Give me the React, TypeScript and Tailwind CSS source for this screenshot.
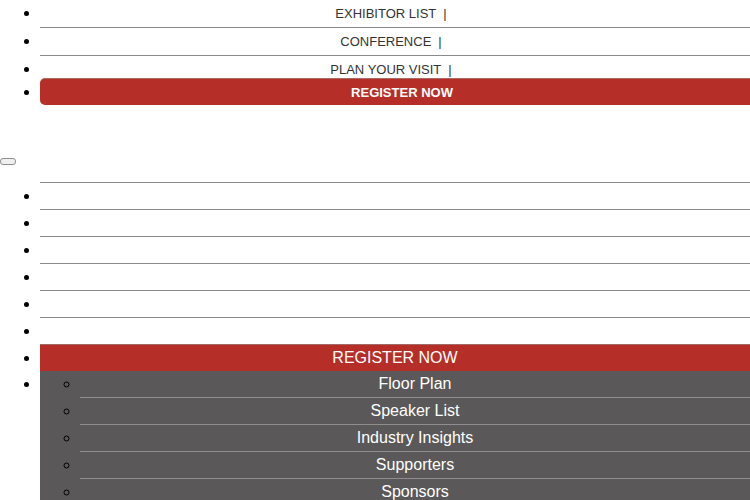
import React from "react";

const topItems = ["EXHIBITOR LIST", "CONFERENCE"];
const subItems = ["Floor Plan", "Speaker List", "Industry Insights", "Supporters", "Sponsors"];

export default function App() {
  return (
    <div className="w-[750px] h-[500px] overflow-hidden bg-white text-black text-[16px]" style={{ fontFamily: '"Liberation Sans", Arial, sans-serif' }}>
      <ul className="list-disc pl-[40px]">
        {topItems.map((t) => (
          <li key={t} className="border-b border-[#8a8a8a]">
            <a className="block h-[27px] leading-[27px] text-center text-[13px] text-[#333] uppercase pr-[8px]">
              {t}
              <span className="ml-[7px]">|</span>
            </a>
          </li>
        ))}
        <li className="h-[22px]">
          <a className="block h-[22px] leading-[27px] text-center text-[13px] text-[#333] uppercase pr-[8px]">
            PLAN YOUR VISIT
            <span className="ml-[7px]">|</span>
          </a>
        </li>
        <li className="leading-[27px]">
          <a className="block h-[27px] leading-[27px] text-center text-[13px] font-bold text-white bg-[#b52f28] rounded-l-[5px] border-t border-[#a86a64] pl-[14px]">
            REGISTER NOW
          </a>
        </li>
      </ul>
      <button className="block mt-[53px] w-[16px] h-[7px] border border-[#8f8f8f] bg-[#efefef] rounded-[3px]" aria-label="menu"></button>
      <ul className="list-disc pl-[40px] mt-[17px]">
        {[0, 1, 2, 3, 4, 5].map((i) => (
          <li key={i} className="border-t border-[#8a8a8a]">
            <a className="block h-[26px] leading-[26px]">&nbsp;</a>
          </li>
        ))}
        <li className="border-t border-[#a06a66] bg-[#b52f28]">
          <a className="block h-[26px] leading-[26px] text-center text-white">REGISTER NOW</a>
        </li>
        <li>
          <ul className="list-[circle] pl-[40px] bg-[#5a5858]">
            {subItems.map((s) => (
              <li key={s} className="border-b border-[#8f8d8d]">
                <a className="block h-[26px] leading-[26px] text-center text-white">{s}</a>
              </li>
            ))}
          </ul>
        </li>
      </ul>
    </div>
  );
}
